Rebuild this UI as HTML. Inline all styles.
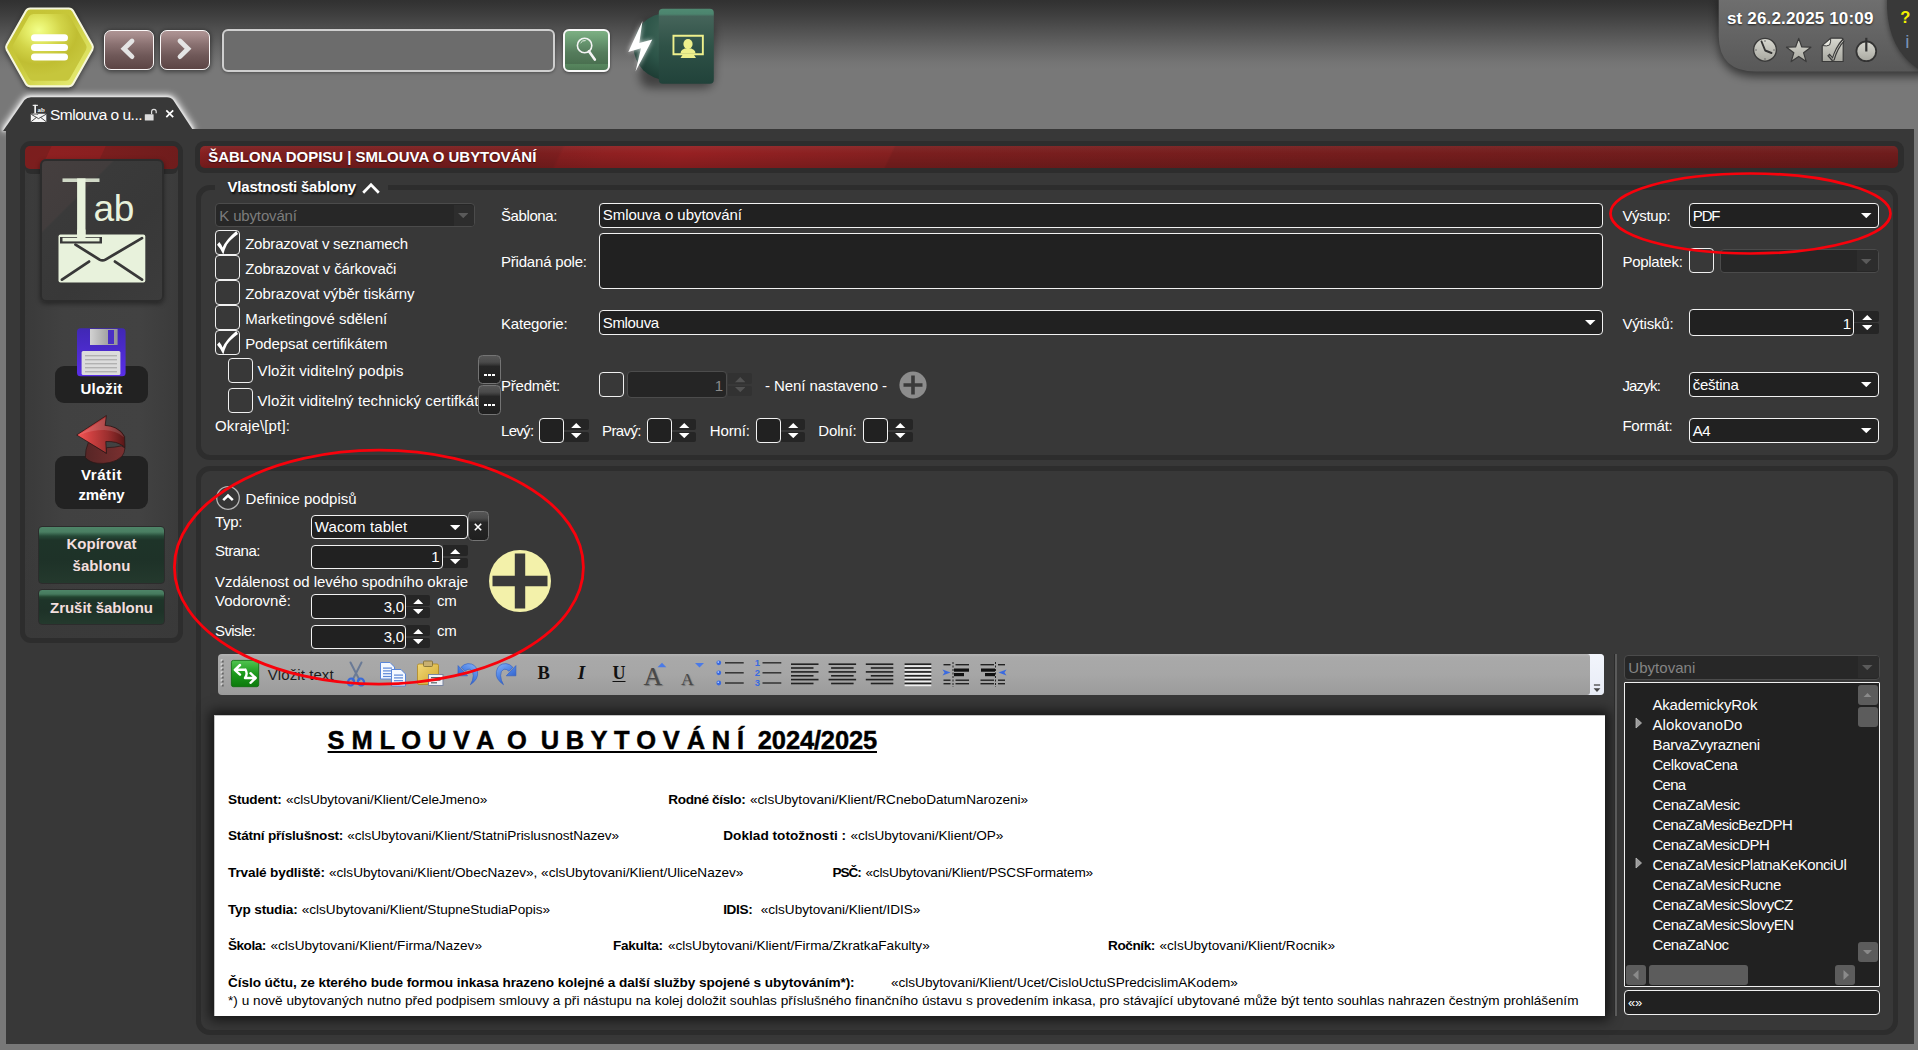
<!DOCTYPE html>
<html lang="cs">
<head>
<meta charset="utf-8">
<title>Šablona dopisu | Smlouva o ubytování</title>
<style>
*{box-sizing:border-box;margin:0;padding:0}
html,body{width:1918px;height:1050px;overflow:hidden;background:#787878}
body{font-family:"Liberation Sans","DejaVu Sans",sans-serif;font-size:15px;color:#fff;position:relative}
#root{position:absolute;left:0;top:0;width:1918px;height:1050px;overflow:hidden;
 background:linear-gradient(#313131 0,#343434 4px,#404040 16px,#535353 32px,#666 48px,#747474 62px,#787878 70px,#787878 100%)}
#root div,#root span,#root svg{position:absolute}
.t{white-space:nowrap;line-height:1;color:#fff}
</style>
</head>
<body>
<div id="root">
<!-- MAIN DARK AREA -->
<div id="main" style="left:6px;top:129px;width:1908px;height:915px;background:#383838"></div>

<!-- TOPBAR -->
<div id="topbar" style="left:0;top:0;width:1918px;height:129px"><svg width="1918" height="135" viewBox="0 0 1918 135" style="left:0;top:0;overflow:visible"><defs>
<filter id="glow" x="-20%" y="-40%" width="140%" height="180%"><feGaussianBlur stdDeviation="3"/></filter>
<filter id="glow1" x="-20%" y="-40%" width="140%" height="180%"><feGaussianBlur stdDeviation="1.1"/></filter><filter id="sh" x="-30%" y="-30%" width="160%" height="180%"><feGaussianBlur stdDeviation="5"/></filter>
<filter id="sh2" x="-30%" y="-30%" width="160%" height="180%"><feGaussianBlur stdDeviation="2.5"/></filter>
<radialGradient id="hexg" cx="0.33" cy="0.2" r="0.8"><stop offset="0" stop-color="#f2ff8a"/><stop offset="0.2" stop-color="#e6ee6a"/><stop offset="0.45" stop-color="#d2d448"/><stop offset="0.75" stop-color="#c0be32"/><stop offset="1" stop-color="#c6c63c"/></radialGradient>
<linearGradient id="hexo" x1="0" y1="0" x2="1" y2="1"><stop offset="0" stop-color="#c4c234"/><stop offset="0.45" stop-color="#c8c83a"/><stop offset="0.7" stop-color="#d8dc58"/><stop offset="1" stop-color="#e8ee78"/></linearGradient>
<linearGradient id="gbox" x1="0" y1="0" x2="0" y2="1"><stop offset="0" stop-color="#4f8a72"/><stop offset="0.07" stop-color="#4c846e"/><stop offset="0.1" stop-color="#45645a"/><stop offset="0.5" stop-color="#2f5247"/><stop offset="1" stop-color="#21423a"/></linearGradient>
<radialGradient id="gcirc" cx="0.6" cy="0.3" r="0.75"><stop offset="0" stop-color="#456a5c"/><stop offset="0.6" stop-color="#2c5448"/><stop offset="1" stop-color="#1c3a32"/></radialGradient>
<linearGradient id="dpan" x1="0" y1="0" x2="0" y2="1"><stop offset="0" stop-color="#707070"/><stop offset="1" stop-color="#585858"/></linearGradient>
<linearGradient id="icg" x1="0" y1="0" x2="0" y2="1"><stop offset="0" stop-color="#d8d8d0"/><stop offset="1" stop-color="#a8a8a0"/></linearGradient>
</defs><path d="M3 131 L24.5 100 Q27 97.2 31 97.2 L167 97.2 Q171 97.2 173.5 100.5 L193.5 131" fill="none" stroke="#fff" stroke-width="6" opacity=".8" filter="url(#glow)"/><path d="M3 131 L24.5 100 Q27 97.2 31 97.2 L167 97.2 Q171 97.2 173.5 100.5 L193.5 131" fill="none" stroke="#fff" stroke-width="3" opacity=".7" filter="url(#glow1)"/><rect x="6" y="129" width="1908" height="11" fill="#383838"/><path d="M3 131 L24.5 100 Q27 97.2 31 97.2 L167 97.2 Q171 97.2 173.5 100.5 L193.5 131 Z" fill="#383838"/><polygon points="11.0,49.4 30.2,15.4 68.8,15.4 88.0,49.4 68.8,83.4 30.2,83.4" fill="#000" stroke="#000" stroke-width="12" stroke-linejoin="round" opacity=".5" filter="url(#sh2)"/><polygon points="11.0,47.4 30.2,13.4 68.8,13.4 88.0,47.4 68.8,81.4 30.2,81.4" fill="#f6f7dc" stroke="#f6f7dc" stroke-width="12" stroke-linejoin="round"/><polygon points="11.0,47.4 30.2,13.4 68.8,13.4 88.0,47.4 68.8,81.4 30.2,81.4" fill="url(#hexo)" stroke="url(#hexo)" stroke-width="7.8" stroke-linejoin="round"/><polygon points="17.3,47.4 33.4,19.0 65.6,19.0 81.7,47.4 65.6,75.8 33.4,75.8" fill="url(#hexg)" stroke="url(#hexg)" stroke-width="10" stroke-linejoin="round"/><rect x="31" y="34.2" width="37" height="7" rx="3.5" fill="#fff"/><rect x="31" y="43.9" width="37" height="7" rx="3.5" fill="#fff"/><rect x="31" y="53.6" width="37" height="7" rx="3.5" fill="#fff"/><rect x="640" y="20" width="74" height="68" rx="10" fill="#000" opacity=".45" filter="url(#sh)"/><circle cx="667" cy="46.5" r="33.5" fill="url(#gcirc)"/><rect x="658.8" y="8.8" width="55" height="75" rx="4" fill="url(#gbox)"/><path d="M642.5 21 L628.3 52 L641 48.2 L635.5 71.5 L652.3 39.5 L639.3 43 Z" fill="#fff" opacity=".8" filter="url(#sh2)"/><path d="M642.5 21 L628.3 52 L641 48.2 L635.5 71.5 L652.3 39.5 L639.3 43 Z" fill="#fff"/><g fill="#eef08c"><path d="M672.5 34.8 h31.3 v20.4 h-31.3 Z M674.4 36.7 v16.6 h27.5 v-16.6 Z" fill-rule="evenodd"/><ellipse cx="688" cy="44" rx="4.6" ry="5"/><path d="M680.5 53.5 q0 -5 7.5 -5.5 q7.5 .5 7.5 5.5 Z"/><path d="M682.5 55 h11.5 l2 3 h-15.5 Z"/></g><path d="M1718.7 -5 L1718.7 36 Q1719 71.6 1756 71.6 L1925 71.6 L1925 -5 Z" fill="#000" opacity=".55" filter="url(#sh)" transform="translate(0,5)"/><path d="M1718.7 -5 L1718.7 36 Q1719 71.6 1756 71.6 L1925 71.6 L1925 -5 Z" fill="url(#dpan)"/><path d="M1886 -5 L1886 8 Q1888 55 1925 74 L1925 -5 Z" fill="#000" opacity=".4" filter="url(#sh2)"/><path d="M1887 -5 L1887 8 Q1889 54 1925 73 L1925 -5 Z" fill="#393939"/><g><circle cx="1765" cy="49.8" r="11.4" fill="url(#icg)" stroke="#3a3a3a" stroke-width="1.4"/><path d="M1761.5 41.5 L1765.2 50.5 L1771.5 53" fill="none" stroke="#333" stroke-width="1.9" stroke-linecap="round" stroke-linejoin="round"/><g fill="#666"><circle cx="1765" cy="41" r=".8"/><circle cx="1765" cy="59" r=".8"/><circle cx="1756" cy="50" r=".8"/><circle cx="1774" cy="50" r=".8"/></g></g><polygon points="1798.7,38.4 1801.8,47.0 1810.9,47.2 1803.6,52.8 1806.2,61.6 1798.7,56.4 1791.2,61.6 1793.8,52.8 1786.5,47.2 1795.6,47.0" fill="url(#icg)" stroke="#3a3a3a" stroke-width="1.2" stroke-linejoin="round"/><g><path d="M1830.7 38.2 L1841.5 38.2 Q1843.2 38.2 1843.2 40 L1843.2 61.5 L1822.2 61.5 L1822.2 45.6 Z" fill="url(#icg)" stroke="#3a3a3a" stroke-width="1.2" stroke-linejoin="round"/><path d="M1822.4 45.6 Q1827 46.5 1829.6 45 Q1831 42 1830.7 38.4 Z" fill="#e6e6de" stroke="#3a3a3a" stroke-width="1"/><path d="M1828.4 54.6 L1833 60 Q1836.5 47.5 1843.6 39.8" fill="none" stroke="#3a3a3a" stroke-width="3.2" stroke-linejoin="bevel"/><path d="M1829.3 55.6 L1833 59.6 Q1836.5 47.8 1843.2 40.6" fill="none" stroke="#c8c8c0" stroke-width=".9"/></g><g><circle cx="1866.3" cy="51.3" r="9.9" fill="url(#icg)" stroke="#333" stroke-width="1.8"/><path d="M1866.3 37.8 V51.5" stroke="#333" stroke-width="2.2" stroke-linecap="butt"/></g></svg>
<div style="left:103.8px;top:30.2px;width:50px;height:39.6px;border:1.8px solid #fbf8f8;border-radius:7px;background:linear-gradient(#ae9494 0,#a48a8a 12%,#8a7171 35%,#6f5858 65%,#5c4545 100%);box-shadow:0 1px 4px 1px rgba(0,0,0,.45)"><svg width="50" height="40" viewBox="0 0 50 40" style="left:-2px;top:-2px"><path d="M29 12 L21 19.8 L29 27.6" fill="none" stroke="#e4e4e4" stroke-width="4.8" stroke-linecap="round" stroke-linejoin="miter"/></svg></div>
<div style="left:160.1px;top:30.2px;width:49.8px;height:39.6px;border:1.8px solid #fbf8f8;border-radius:7px;background:linear-gradient(#ae9494 0,#a48a8a 12%,#8a7171 35%,#6f5858 65%,#5c4545 100%);box-shadow:0 1px 4px 1px rgba(0,0,0,.45)"><svg width="50" height="40" viewBox="0 0 50 40" style="left:-2px;top:-2px"><path d="M21 12 L29 19.8 L21 27.6" fill="none" stroke="#e4e4e4" stroke-width="4.8" stroke-linecap="round" stroke-linejoin="miter"/></svg></div>
<div style="left:222px;top:28.8px;width:333.3px;height:43.2px;border:2px solid #cfcfcf;border-radius:6px;background:#6c6c6c;box-shadow:0 1px 3px rgba(0,0,0,.35)"></div>
<div style="left:562.5px;top:28.8px;width:47.5px;height:43.2px;border:2px solid #f8f8f8;border-radius:6px;background:linear-gradient(#7db083 0,#6a9a72 25%,#557c5c 55%,#4a7050 84%,#57865e 86%,#4f7a56 100%);box-shadow:0 1px 3px rgba(0,0,0,.45)"><svg width="48" height="44" viewBox="0 0 48 44" style="left:-2px;top:-2px"><circle cx="21.6" cy="16.5" r="7.2" fill="none" stroke="#f4f4f4" stroke-width="1.6"/><path d="M17.6 14 A5 5 0 0 1 22.6 11.6" fill="none" stroke="#e8f0e8" stroke-width="1"/><path d="M25.9 22.3 L31.8 30.6" stroke="#f4f4f4" stroke-width="2.6" stroke-linecap="round"/></svg></div>
<span class="t" style="left:1727.00px;top:9.91px;font-size:17px;line-height:17px;font-weight:700;text-shadow:0 1px 2px rgba(0,0,0,.7);letter-spacing:0.157px;">st 26.2.2025 10:09</span>
<span class="t" style="left:1900.30px;top:9.23px;font-size:16.5px;line-height:16.5px;font-weight:700;color:#f2f000;">?</span>
<span class="t" style="left:1905.20px;top:31.62px;font-size:19px;line-height:19px;color:#7892b8;">i</span>
<svg width="20" height="20" viewBox="30 103 20 20" style="left:30px;top:103px"><g fill="#f4f4f4"><rect x="32.7" y="104.8" width="5.2" height="1.1"/><rect x="34.3" y="104.8" width="1.7" height="10"/><rect x="30.8" y="113.8" width="15.5" height="8.2" rx=".6"/></g><path d="M31.2 114.3 L38.5 118.6 L46 114.3 M31.2 121.6 L36.3 117.5 M46 121.6 L40.8 117.5" stroke="#383838" stroke-width=".9" fill="none"/><path d="M32.5 113.4 h5.6 v1.5 h-5.6 Z" fill="#383838"/><rect x="32.9" y="113.6" width="4.8" height=".9" fill="#f4f4f4"/></svg>
<span class="t" style="left:37.60px;top:106.71px;font-size:6.8px;line-height:6.8px;font-weight:700;color:#f4f4f4;font-family:'Liberation Serif',serif;">ab</span>
<span class="t" style="left:50.00px;top:107.48px;font-size:15.5px;line-height:15.5px;letter-spacing:-0.506px;">Smlouva o u...</span>
<svg width="14" height="16" viewBox="0 0 14 16" style="left:144px;top:106.6px"><rect x=".8" y="7.2" width="8.8" height="6.3" rx=".6" fill="#dcdcdc"/><path d="M7.6 7 V4.6 A2.3 2.3 0 0 1 12.2 4.6 V6.2" fill="none" stroke="#dcdcdc" stroke-width="1.2"/></svg>
<svg width="12" height="12" viewBox="0 0 12 12" style="left:164px;top:108px"><path d="M2.3 2.3 L9.2 9.2 M9.2 2.3 L2.3 9.2" stroke="#fff" stroke-width="1.7"/></svg></div>

<!-- LEFT PANEL -->
<div id="left" style="left:0;top:0;width:200px;height:1050px"><div style="left:20px;top:140.5px;width:163px;height:502px;border:5px solid #2d2d2d;border-radius:11px;background:linear-gradient(rgba(56,56,56,0) 0,rgba(56,56,56,0) 80%,rgba(57,57,57,.9) 97%),linear-gradient(90deg,#3a3a3a 0,#414141 25%,#424242 75%,#3b3b3b 100%)"></div>
<div style="left:25px;top:145px;width:153px;height:29px;background:#2d2d2d;border-radius:5px 5px 6px 6px"></div>
<div style="left:25.4px;top:146px;width:152.6px;height:23.4px;background:linear-gradient(115deg,#7b1e1e 0,#7c1e1e 16%,#8e2021 16.6%,#8a1f20 49%,#7a1e1e 49.6%,#6e1c1c 100%);border-radius:5px"></div>
<div style="left:39.5px;top:159.4px;width:124.3px;height:143px;border:2px solid #2c2c2c;border-radius:6px;background:linear-gradient(135deg,#453f3f 0,#423d3d 27%,#3a3a3a 28%,#383838 60%,#3c3c3c 100%);box-shadow:0 2px 5px rgba(0,0,0,.4)"></div>
<svg width="124" height="143" viewBox="39.5 159.4 124 143" style="left:39.5px;top:159.4px"><g fill="#e8f2dc"><rect x="62" y="178.8" width="37" height="3.6" fill="#d0d8c6"/><rect x="76.6" y="178.8" width="8.4" height="62"/><rect x="58" y="235" width="86.8" height="48" rx="2"/></g><path d="M59.5 237.5 h42 v6.5 h-42 Z" fill="#383838"/><rect x="62" y="238.2" width="37" height="3.6" fill="#e8f2dc"/><rect x="76.6" y="230" width="8.4" height="10" fill="#e8f2dc"/><path d="M75 245 L99 260 Q102 261.7 105 260 L141.5 238.5 M61.5 280 L88.5 262 M141.5 280 L114.5 262" fill="none" stroke="#383838" stroke-width="2.8" stroke-linecap="round"/></svg>
<span class="t" style="left:93.50px;top:189.68px;font-size:37px;line-height:37px;color:#e8f2dc;letter-spacing:-0.328px;">ab</span>
<div style="left:55px;top:366px;width:93px;height:37px;background:#222;border-radius:9px"></div>
<svg width="50" height="50" viewBox="76 327 50 50" style="left:76px;top:327px"><defs><linearGradient id="fl" x1="0" y1="0" x2="0" y2="1"><stop offset="0" stop-color="#4028b4"/><stop offset="1" stop-color="#5a2ee8"/></linearGradient><linearGradient id="sv" x1="0" y1="0" x2="1" y2="0"><stop offset="0" stop-color="#d2d2d2"/><stop offset=".6" stop-color="#a6a6a6"/><stop offset="1" stop-color="#969696"/></linearGradient></defs><rect x="77" y="328.3" width="48.6" height="48" rx="3.5" fill="url(#fl)"/><rect x="90" y="329" width="27.6" height="16" fill="url(#sv)"/><rect x="108" y="330" width="6" height="14" fill="#4a30c4"/><rect x="81.6" y="351" width="38.8" height="24" rx="1.5" fill="#dcdcdc"/><rect x="85" y="355.5" width="32" height=".7" fill="#868686"/><rect x="85" y="359.5" width="32" height=".7" fill="#868686"/><rect x="85" y="363.5" width="32" height=".7" fill="#868686"/><rect x="85" y="367.5" width="32" height=".7" fill="#868686"/><rect x="85" y="371.5" width="32" height=".7" fill="#868686"/></svg>
<span class="t" style="left:80.50px;top:381.10px;font-size:15px;line-height:15px;font-weight:700;letter-spacing:0.195px;">Uložit</span>
<div style="left:55px;top:456px;width:93px;height:53px;background:#222;border-radius:9px"></div>
<svg width="54" height="52" viewBox="74 414 54 52" style="left:74px;top:414px"><defs><linearGradient id="ar1" x1="0" y1="0" x2="1" y2="0"><stop offset="0" stop-color="#f85858"/><stop offset=".3" stop-color="#cc4040"/><stop offset=".65" stop-color="#9a2e2e"/><stop offset="1" stop-color="#561616"/></linearGradient><linearGradient id="ar2" x1="0" y1="0" x2="1" y2="0"><stop offset="0" stop-color="#572626"/><stop offset="1" stop-color="#7a3030"/></linearGradient></defs><path d="M88.5 442 Q85 450 85.4 457.6 Q90 462.5 97.2 463.2 Q104 463.8 109.5 462.6 Q117 461 121.9 456.4 Q124.5 453.5 125 448 L121.3 445.9 Q115 447.5 106.4 447.7 L106.4 453.3 Z" fill="url(#ar2)" stroke="#2a1616" stroke-width=".7"/><path d="M76.7 435 L106.4 415.5 L105.2 425.4 Q111 425.8 115.7 427.9 Q122 431 124.6 436.5 L125 447.7 Q123.6 446.2 121.9 445.2 Q119 443.4 115.7 442.4 Q111 441.3 105.8 441.5 L106.4 453.3 Z" fill="url(#ar1)" stroke="#2a1616" stroke-width=".8" stroke-linejoin="round"/><path d="M79 435 L105.6 417.5 L104.5 426 Q112 426.2 117 429.5 Q122 432.5 124.2 437.5 Q117 430.5 104 430 Q92 430 79 435 Z" fill="#fff" opacity=".13"/></svg>
<span class="t" style="left:81.00px;top:466.80px;font-size:15px;line-height:15px;font-weight:700;letter-spacing:0.581px;">Vrátit</span>
<span class="t" style="left:78.50px;top:486.80px;font-size:15px;line-height:15px;font-weight:700;letter-spacing:-0.138px;">změny</span>
<div style="left:38px;top:526.2px;width:127.2px;height:57.8px;border:1px solid #2c2c2c;border-radius:4px;background:linear-gradient(#4e8568 0,#4a7e62 5px,#264a38 9px,#1e3429 13px,#1e3228 60%,#24392d 100%)"></div>
<div style="left:38px;top:589px;width:127.2px;height:35.8px;border:1px solid #2c2c2c;border-radius:4px;background:linear-gradient(#4e8568 0,#467a5e 4px,#22432f 7px,#1e3429 10px,#1e3228 60%,#24392d 100%)"></div>
<span class="t" style="left:66.50px;top:536.10px;font-size:15px;line-height:15px;font-weight:700;color:#f2dede;letter-spacing:-0.002px;">Kopírovat</span>
<span class="t" style="left:72.50px;top:558.00px;font-size:15px;line-height:15px;font-weight:700;color:#f2dede;letter-spacing:0.069px;">šablonu</span>
<span class="t" style="left:50.00px;top:599.70px;font-size:15px;line-height:15px;font-weight:700;color:#f2dede;letter-spacing:-0.025px;">Zrušit šablonu</span></div>

<!-- HEADER + PROPERTIES -->
<div id="props" style="left:0;top:0;width:1918px;height:480px"><div style="left:195px;top:141px;width:1708.5px;height:32px;background:#2d2d2d;border-radius:9px"></div>
<div style="left:199.6px;top:146.2px;width:1698.9px;height:21.6px;border-radius:5px;background:linear-gradient(115deg,#8a2021 0,#7d1e1f 1.2%,#7a1e1e 20%,#7d1e1f 21.2%,#871f20 21.4%,#8f2021 24%,#962022 28.5%,#8c2021 35%,#852020 40.6%,#7a1e1e 40.75%,#741d1d 70%,#6e1c1c 100%)"></div>
<div style="left:199.6px;top:146.2px;width:1698.9px;height:21.6px;border-radius:5px;background:linear-gradient(rgba(255,255,255,.05) 0,rgba(255,255,255,0) 35%,rgba(0,0,0,.14) 100%)"></div>
<span class="t" style="left:208.30px;top:148.70px;font-size:15px;line-height:15px;font-weight:700;text-shadow:0 1px 1px rgba(0,0,0,.5);letter-spacing:-0.034px;">ŠABLONA DOPISU | SMLOUVA O UBYTOVÁNÍ</span>
<div style="left:196px;top:185px;width:1702px;height:274.8px;border:5px solid #2d2d2d;border-radius:14px"></div>
<div style="left:215px;top:183px;width:173px;height:10px;background:#383838"></div>
<span class="t" style="left:227.60px;top:178.60px;font-size:15px;line-height:15px;font-weight:700;text-shadow:1px 2px 2px rgba(0,0,0,.8);letter-spacing:-0.230px;">Vlastnosti šablony</span>
<svg width="20" height="14" viewBox="0 0 20 14" style="left:360.5px;top:181px"><path d="M2.2 11.8 L10 3.8 L17.8 11.8" fill="none" stroke="#fff" stroke-width="2.7"/></svg>
<div style="left:215.3px;top:203.2px;width:260.2px;height:24.3px;background:#272727;border:1.4px solid #4b4b4b;border-radius:4px"></div><div style="left:453.5px;top:204.6px;width:20.6px;height:21.5px;background:#2d2d2d;border-radius:0 3px 3px 0"></div><span class="t" style="left:219.30px;top:208.10px;font-size:15px;line-height:15px;color:#7c7c7c;letter-spacing:-0.156px;">K ubytování</span><svg width="10.5" height="5.2" viewBox="0 0 10.5 5.2" style="left:457.75px;top:213.05px"><path d="M0 0 H10.5 L5.25 5.2 Z" fill="#5a5a5a"/></svg>
<div style="left:215px;top:230px;width:25.2px;height:25.2px;border:1.6px solid #f0f0f0;border-radius:4px;background:#383838"></div><svg width="30" height="30" viewBox="0 0 30 30" style="left:215px;top:230px;overflow:visible"><path d="M2 14.8 L4.3 12 Q6.5 14.5 7.6 17.6 Q11 9.5 21.3 1 L23 4 Q14.5 10.5 12 14.5 Q9.5 19.5 8.3 24.5 Q5.5 18.5 2 14.8 Z" fill="#fff"/></svg>
<span class="t" style="left:245.20px;top:235.70px;font-size:15px;line-height:15px;letter-spacing:-0.226px;">Zobrazovat v seznamech</span>
<div style="left:215px;top:255px;width:25.2px;height:25.2px;border:1.6px solid #f0f0f0;border-radius:4px;background:#383838"></div>
<span class="t" style="left:245.20px;top:260.70px;font-size:15px;line-height:15px;letter-spacing:-0.147px;">Zobrazovat v čárkovači</span>
<div style="left:215px;top:280px;width:25.2px;height:25.2px;border:1.6px solid #f0f0f0;border-radius:4px;background:#383838"></div>
<span class="t" style="left:245.20px;top:285.70px;font-size:15px;line-height:15px;letter-spacing:-0.097px;">Zobrazovat výběr tiskárny</span>
<div style="left:215px;top:305px;width:25.2px;height:25.2px;border:1.6px solid #f0f0f0;border-radius:4px;background:#383838"></div>
<span class="t" style="left:245.20px;top:310.70px;font-size:15px;line-height:15px;letter-spacing:-0.035px;">Marketingové sdělení</span>
<div style="left:215px;top:330px;width:25.2px;height:25.2px;border:1.6px solid #f0f0f0;border-radius:4px;background:#383838"></div><svg width="30" height="30" viewBox="0 0 30 30" style="left:215px;top:330px;overflow:visible"><path d="M2 14.8 L4.3 12 Q6.5 14.5 7.6 17.6 Q11 9.5 21.3 1 L23 4 Q14.5 10.5 12 14.5 Q9.5 19.5 8.3 24.5 Q5.5 18.5 2 14.8 Z" fill="#fff"/></svg>
<span class="t" style="left:245.20px;top:335.70px;font-size:15px;line-height:15px;letter-spacing:-0.093px;">Podepsat certifikátem</span>
<div style="left:228px;top:358px;width:25.2px;height:25.2px;border:1.6px solid #f0f0f0;border-radius:4px;background:#383838"></div>
<span class="t" style="left:257.50px;top:362.50px;font-size:15px;line-height:15px;letter-spacing:0.121px;">Vložit viditelný podpis</span>
<div style="left:228px;top:388.3px;width:25.2px;height:25.2px;border:1.6px solid #f0f0f0;border-radius:4px;background:#383838"></div>
<span class="t" style="left:257.50px;top:392.50px;font-size:15px;line-height:15px;letter-spacing:0.072px;">Vložit viditelný technický certifkát</span>
<div style="left:478px;top:354.9px;width:22.8px;height:28.7px;border:1.3px solid #747474;border-radius:4.5px;background:linear-gradient(#565656 0,#4b4b4b 6px,#3d3d3d 8px,#262626 10.5px,#1f1f1f 100%)"></div>
<div style="left:478px;top:384.6px;width:22.8px;height:30.1px;border:1.3px solid #747474;border-radius:4.5px;background:linear-gradient(#565656 0,#4b4b4b 6px,#3d3d3d 8px,#262626 10.5px,#1f1f1f 100%)"></div>
<div style="left:483.7px;top:374px;width:3.3px;height:2.3px;background:#fff"></div>
<div style="left:487.9px;top:374px;width:3.3px;height:2.3px;background:#fff"></div>
<div style="left:492.1px;top:374px;width:3.3px;height:2.3px;background:#fff"></div>
<div style="left:483.7px;top:403.8px;width:3.3px;height:2.3px;background:#fff"></div>
<div style="left:487.9px;top:403.8px;width:3.3px;height:2.3px;background:#fff"></div>
<div style="left:492.1px;top:403.8px;width:3.3px;height:2.3px;background:#fff"></div>
<span class="t" style="left:215.00px;top:418.20px;font-size:15px;line-height:15px;letter-spacing:0.137px;">Okraje\[pt]:</span>
<span class="t" style="left:501.00px;top:208.10px;font-size:15px;line-height:15px;letter-spacing:-0.402px;">Šablona:</span>
<div style="left:599px;top:203.3px;width:1004px;height:24.6px;background:#212121;border:1.7px solid #f2f2f2;border-radius:4px"></div><span class="t" style="left:602.80px;top:207.40px;font-size:15px;line-height:15px;letter-spacing:-0.047px;">Smlouva o ubytování</span>
<span class="t" style="left:501.00px;top:253.60px;font-size:15px;line-height:15px;letter-spacing:-0.200px;">Přidaná pole:</span>
<div style="left:599px;top:233px;width:1004px;height:56px;background:#212121;border:1.7px solid #f2f2f2;border-radius:4px"></div>
<span class="t" style="left:501.00px;top:315.80px;font-size:15px;line-height:15px;letter-spacing:-0.199px;">Kategorie:</span>
<div style="left:599px;top:310px;width:1004px;height:25px;background:#212121;border:1.7px solid #f2f2f2;border-radius:4px"></div><span class="t" style="left:602.80px;top:314.80px;font-size:15px;line-height:15px;letter-spacing:-0.337px;">Smlouva</span><svg width="10.5" height="5.2" viewBox="0 0 10.5 5.2" style="left:1585.15px;top:320.20px"><path d="M0 0 H10.5 L5.25 5.2 Z" fill="#fff"/></svg>
<span class="t" style="left:501.00px;top:377.90px;font-size:15px;line-height:15px;letter-spacing:-0.232px;">Předmět:</span>
<div style="left:599px;top:372px;width:25.2px;height:25.2px;border:1.6px solid #f0f0f0;border-radius:4px;background:#383838"></div>
<div style="left:627.3px;top:371.2px;width:99.4px;height:26.4px;background:#252525;border:1.3px solid #4c4c4c;border-radius:4px"></div>
<span class="t" style="left:714.66px;top:377.60px;font-size:15px;line-height:15px;color:#8a8a8a;">1</span>
<div style="left:727.5px;top:373.35px;width:24px;height:11px;background:#323232;border-radius:0 2px 2px 0"></div><div style="left:727.5px;top:385.55px;width:24px;height:10.3px;background:#323232;border-radius:0 2px 2px 0"></div><svg width="10.5" height="5.2" viewBox="0 0 10.5 5.2" style="left:734.55px;top:377.35px"><path d="M0 5.2 H10.5 L5.25 0 Z" fill="#525252"/></svg><svg width="10.5" height="5.2" viewBox="0 0 10.5 5.2" style="left:734.55px;top:387.25px"><path d="M0 0 H10.5 L5.25 5.2 Z" fill="#525252"/></svg>
<span class="t" style="left:765.00px;top:378.30px;font-size:15px;line-height:15px;letter-spacing:-0.078px;">- Není nastaveno -</span>
<svg width="30" height="30" viewBox="0 0 30 30" style="left:898px;top:369.8px"><circle cx="15" cy="15" r="13.6" fill="#8c8c8c"/><path d="M15 5.5 V24.5 M5.5 15 H24.5" stroke="#3a3a3a" stroke-width="3.6"/></svg>
<span class="t" style="left:501.00px;top:422.50px;font-size:15px;line-height:15px;letter-spacing:-0.692px;">Levý:</span>
<div style="left:539px;top:418.2px;width:25px;height:24.8px;background:#212121;border:1.7px solid #f2f2f2;border-radius:4px"></div>
<div style="left:564px;top:419.3px;width:24.7px;height:11px;background:#252525;border-radius:0 2px 2px 0"></div><div style="left:564px;top:431.5px;width:24.7px;height:10.3px;background:#252525;border-radius:0 2px 2px 0"></div><svg width="10.5" height="5.2" viewBox="0 0 10.5 5.2" style="left:571.40px;top:423.30px"><path d="M0 5.2 H10.5 L5.25 0 Z" fill="#fff"/></svg><svg width="10.5" height="5.2" viewBox="0 0 10.5 5.2" style="left:571.40px;top:433.20px"><path d="M0 0 H10.5 L5.25 5.2 Z" fill="#fff"/></svg>
<span class="t" style="left:602.00px;top:422.50px;font-size:15px;line-height:15px;letter-spacing:-0.603px;">Pravý:</span>
<div style="left:646.7px;top:418.2px;width:25px;height:24.8px;background:#212121;border:1.7px solid #f2f2f2;border-radius:4px"></div>
<div style="left:671.7px;top:419.3px;width:24.7px;height:11px;background:#252525;border-radius:0 2px 2px 0"></div><div style="left:671.7px;top:431.5px;width:24.7px;height:10.3px;background:#252525;border-radius:0 2px 2px 0"></div><svg width="10.5" height="5.2" viewBox="0 0 10.5 5.2" style="left:679.10px;top:423.30px"><path d="M0 5.2 H10.5 L5.25 0 Z" fill="#fff"/></svg><svg width="10.5" height="5.2" viewBox="0 0 10.5 5.2" style="left:679.10px;top:433.20px"><path d="M0 0 H10.5 L5.25 5.2 Z" fill="#fff"/></svg>
<span class="t" style="left:709.80px;top:422.50px;font-size:15px;line-height:15px;letter-spacing:-0.160px;">Horní:</span>
<div style="left:755.8px;top:418.2px;width:25px;height:24.8px;background:#212121;border:1.7px solid #f2f2f2;border-radius:4px"></div>
<div style="left:780.8px;top:419.3px;width:24.7px;height:11px;background:#252525;border-radius:0 2px 2px 0"></div><div style="left:780.8px;top:431.5px;width:24.7px;height:10.3px;background:#252525;border-radius:0 2px 2px 0"></div><svg width="10.5" height="5.2" viewBox="0 0 10.5 5.2" style="left:788.20px;top:423.30px"><path d="M0 5.2 H10.5 L5.25 0 Z" fill="#fff"/></svg><svg width="10.5" height="5.2" viewBox="0 0 10.5 5.2" style="left:788.20px;top:433.20px"><path d="M0 0 H10.5 L5.25 5.2 Z" fill="#fff"/></svg>
<span class="t" style="left:818.30px;top:422.50px;font-size:15px;line-height:15px;letter-spacing:-0.165px;">Dolní:</span>
<div style="left:863px;top:418.2px;width:25px;height:24.8px;background:#212121;border:1.7px solid #f2f2f2;border-radius:4px"></div>
<div style="left:888px;top:419.3px;width:24.7px;height:11px;background:#252525;border-radius:0 2px 2px 0"></div><div style="left:888px;top:431.5px;width:24.7px;height:10.3px;background:#252525;border-radius:0 2px 2px 0"></div><svg width="10.5" height="5.2" viewBox="0 0 10.5 5.2" style="left:895.40px;top:423.30px"><path d="M0 5.2 H10.5 L5.25 0 Z" fill="#fff"/></svg><svg width="10.5" height="5.2" viewBox="0 0 10.5 5.2" style="left:895.40px;top:433.20px"><path d="M0 0 H10.5 L5.25 5.2 Z" fill="#fff"/></svg>
<span class="t" style="left:1622.40px;top:208.10px;font-size:15px;line-height:15px;letter-spacing:-0.304px;">Výstup:</span>
<div style="left:1689px;top:203.3px;width:190px;height:24.6px;background:#212121;border:1.7px solid #f2f2f2;border-radius:4px"></div><span class="t" style="left:1692.80px;top:208.10px;font-size:15px;line-height:15px;letter-spacing:-1.133px;">PDF</span><svg width="10.5" height="5.2" viewBox="0 0 10.5 5.2" style="left:1861.15px;top:213.30px"><path d="M0 0 H10.5 L5.25 5.2 Z" fill="#fff"/></svg>
<span class="t" style="left:1622.40px;top:253.60px;font-size:15px;line-height:15px;letter-spacing:-0.261px;">Poplatek:</span>
<div style="left:1689px;top:248.3px;width:25.2px;height:25.2px;border:1.6px solid #f0f0f0;border-radius:4px;background:#383838"></div>
<div style="left:1719.5px;top:249px;width:159.5px;height:23.6px;background:#272727;border:1.4px solid #4b4b4b;border-radius:4px"></div><div style="left:1857px;top:250.4px;width:20.6px;height:20.8px;background:#2d2d2d;border-radius:0 3px 3px 0"></div><svg width="10.5" height="5.2" viewBox="0 0 10.5 5.2" style="left:1861.25px;top:258.50px"><path d="M0 0 H10.5 L5.25 5.2 Z" fill="#5a5a5a"/></svg>
<span class="t" style="left:1622.40px;top:315.80px;font-size:15px;line-height:15px;letter-spacing:-0.177px;">Výtisků:</span>
<div style="left:1689px;top:308.9px;width:165px;height:27.1px;background:#212121;border:1.7px solid #f2f2f2;border-radius:4px"></div><span class="t" style="left:1842.66px;top:315.90px;font-size:15px;line-height:15px;">1</span>
<div style="left:1854px;top:311.2px;width:25px;height:11px;background:#252525;border-radius:0 2px 2px 0"></div><div style="left:1854px;top:323.4px;width:25px;height:10.3px;background:#252525;border-radius:0 2px 2px 0"></div><svg width="10.5" height="5.2" viewBox="0 0 10.5 5.2" style="left:1861.55px;top:315.20px"><path d="M0 5.2 H10.5 L5.25 0 Z" fill="#fff"/></svg><svg width="10.5" height="5.2" viewBox="0 0 10.5 5.2" style="left:1861.55px;top:325.10px"><path d="M0 0 H10.5 L5.25 5.2 Z" fill="#fff"/></svg>
<span class="t" style="left:1622.40px;top:378.30px;font-size:15px;line-height:15px;letter-spacing:-0.819px;">Jazyk:</span>
<div style="left:1689px;top:372px;width:190px;height:25px;background:#212121;border:1.7px solid #f2f2f2;border-radius:4px"></div><span class="t" style="left:1692.80px;top:376.80px;font-size:15px;line-height:15px;letter-spacing:-0.262px;">čeština</span><svg width="10.5" height="5.2" viewBox="0 0 10.5 5.2" style="left:1861.15px;top:382.20px"><path d="M0 0 H10.5 L5.25 5.2 Z" fill="#fff"/></svg>
<span class="t" style="left:1622.40px;top:418.30px;font-size:15px;line-height:15px;letter-spacing:-0.212px;">Formát:</span>
<div style="left:1689px;top:418.2px;width:190px;height:24.6px;background:#212121;border:1.7px solid #f2f2f2;border-radius:4px"></div><span class="t" style="left:1692.80px;top:423.00px;font-size:15px;line-height:15px;letter-spacing:-0.480px;">A4</span><svg width="10.5" height="5.2" viewBox="0 0 10.5 5.2" style="left:1861.15px;top:428.20px"><path d="M0 0 H10.5 L5.25 5.2 Z" fill="#fff"/></svg></div>

<!-- LOWER PANEL -->
<div id="lower" style="left:0;top:0;width:1918px;height:1050px"><div style="left:196px;top:466.3px;width:1702px;height:568.4px;border:5.2px solid #2d2d2d;border-radius:14px"></div>
<svg width="26" height="26" viewBox="0 0 26 26" style="left:215.3px;top:484.9px"><circle cx="13" cy="13" r="11.3" fill="#363636" stroke="#b4b4b4" stroke-width="1.3"/><path d="M8.2 15.2 L13 10.5 L17.8 15.2" fill="none" stroke="#fff" stroke-width="2.5"/></svg>
<span class="t" style="left:245.60px;top:490.90px;font-size:15px;line-height:15px;letter-spacing:0.006px;">Definice podpisů</span>
<span class="t" style="left:215.00px;top:513.60px;font-size:15px;line-height:15px;letter-spacing:-0.340px;">Typ:</span>
<div style="left:311px;top:514.5px;width:156.7px;height:24.7px;background:#212121;border:1.7px solid #f2f2f2;border-radius:4px"></div><span class="t" style="left:314.80px;top:519.30px;font-size:15px;line-height:15px;letter-spacing:0.112px;">Wacom tablet</span><svg width="10.5" height="5.2" viewBox="0 0 10.5 5.2" style="left:449.85px;top:524.55px"><path d="M0 0 H10.5 L5.25 5.2 Z" fill="#fff"/></svg>
<div style="left:468px;top:511.2px;width:20.8px;height:29.4px;border:1.3px solid #747474;border-radius:4.5px;background:linear-gradient(#565656 0,#4b4b4b 6px,#3d3d3d 8px,#262626 10.5px,#1f1f1f 100%)"></div>
<svg width="10" height="10" viewBox="0 0 10 10" style="left:473.3px;top:522.3px"><path d="M1.8 1.8 L8.2 8.2 M8.2 1.8 L1.8 8.2" stroke="#fff" stroke-width="1.6"/></svg>
<span class="t" style="left:215.00px;top:543.30px;font-size:15px;line-height:15px;letter-spacing:-0.482px;">Strana:</span>
<div style="left:311px;top:544.5px;width:131.7px;height:24.2px;background:#212121;border:1.7px solid #f2f2f2;border-radius:4px"></div><span class="t" style="left:431.36px;top:549.30px;font-size:15px;line-height:15px;">1</span>
<div style="left:442.7px;top:545.3px;width:25px;height:11px;background:#252525;border-radius:0 2px 2px 0"></div><div style="left:442.7px;top:557.5px;width:25px;height:10.3px;background:#252525;border-radius:0 2px 2px 0"></div><svg width="10.5" height="5.2" viewBox="0 0 10.5 5.2" style="left:450.25px;top:549.30px"><path d="M0 5.2 H10.5 L5.25 0 Z" fill="#fff"/></svg><svg width="10.5" height="5.2" viewBox="0 0 10.5 5.2" style="left:450.25px;top:559.20px"><path d="M0 0 H10.5 L5.25 5.2 Z" fill="#fff"/></svg>
<span class="t" style="left:215.00px;top:574.20px;font-size:15px;line-height:15px;letter-spacing:-0.038px;">Vzdálenost od levého spodního okraje</span>
<span class="t" style="left:215.00px;top:593.30px;font-size:15px;line-height:15px;letter-spacing:0.009px;">Vodorovně:</span>
<div style="left:311px;top:594px;width:94.6px;height:24.8px;background:#212121;border:1.7px solid #f2f2f2;border-radius:4px"></div><span class="t" style="left:383.70px;top:598.80px;font-size:15px;line-height:15px;letter-spacing:-0.286px;">3,0</span>
<div style="left:405.6px;top:595.1px;width:24.4px;height:11px;background:#252525;border-radius:0 2px 2px 0"></div><div style="left:405.6px;top:607.3px;width:24.4px;height:10.3px;background:#252525;border-radius:0 2px 2px 0"></div><svg width="10.5" height="5.2" viewBox="0 0 10.5 5.2" style="left:412.85px;top:599.10px"><path d="M0 5.2 H10.5 L5.25 0 Z" fill="#fff"/></svg><svg width="10.5" height="5.2" viewBox="0 0 10.5 5.2" style="left:412.85px;top:609.00px"><path d="M0 0 H10.5 L5.25 5.2 Z" fill="#fff"/></svg>
<span class="t" style="left:437.00px;top:593.30px;font-size:15px;line-height:15px;letter-spacing:-0.250px;">cm</span>
<span class="t" style="left:215.00px;top:623.40px;font-size:15px;line-height:15px;letter-spacing:-0.598px;">Svisle:</span>
<div style="left:311px;top:624.5px;width:94.6px;height:24.2px;background:#212121;border:1.7px solid #f2f2f2;border-radius:4px"></div><span class="t" style="left:383.70px;top:629.30px;font-size:15px;line-height:15px;letter-spacing:-0.286px;">3,0</span>
<div style="left:405.6px;top:625.3px;width:24.4px;height:11px;background:#252525;border-radius:0 2px 2px 0"></div><div style="left:405.6px;top:637.5px;width:24.4px;height:10.3px;background:#252525;border-radius:0 2px 2px 0"></div><svg width="10.5" height="5.2" viewBox="0 0 10.5 5.2" style="left:412.85px;top:629.30px"><path d="M0 5.2 H10.5 L5.25 0 Z" fill="#fff"/></svg><svg width="10.5" height="5.2" viewBox="0 0 10.5 5.2" style="left:412.85px;top:639.20px"><path d="M0 0 H10.5 L5.25 5.2 Z" fill="#fff"/></svg>
<span class="t" style="left:437.00px;top:623.40px;font-size:15px;line-height:15px;letter-spacing:-0.250px;">cm</span>
<svg width="64" height="64" viewBox="0 0 64 64" style="left:488px;top:549px"><circle cx="32" cy="32" r="31" fill="#f3f1aa"/><path d="M32 4.5 V59.5 M4.5 32 H59.5" stroke="#3a3a3a" stroke-width="10.4"/></svg>
<div style="left:218px;top:654px;width:1386px;height:41.2px;border-radius:4px;background:linear-gradient(#b6b6b6 0,#a9a9a9 3px,#a6a6a6 50%,#9b9b9b 100%)"></div><div style="left:1586px;top:654px;width:18.2px;height:41px;border-radius:0 4px 4px 0;background:linear-gradient(#f2f5fc,#e8ecf6)"></div><div style="left:1580px;top:654px;width:9.6px;height:41.2px;border-radius:0 3px 3px 0;background:linear-gradient(#b6b6b6 0,#a9a9a9 3px,#a6a6a6 50%,#9b9b9b 100%)"></div><svg width="10" height="10" viewBox="0 0 10 10" style="left:1592px;top:682.6px"><path d="M1.9 2 H8.1" stroke="#444" stroke-width="1.3"/><path d="M1.6 5.2 H8.4 L5 8.9 Z" fill="#444"/></svg><svg width="800" height="42" viewBox="218 654 800 42" style="left:218px;top:654px"><defs><linearGradient id="gi" x1="0" y1="0" x2="0" y2="1"><stop offset="0" stop-color="#52c452"/><stop offset=".5" stop-color="#1c9a1c"/><stop offset="1" stop-color="#0c7a0c"/></linearGradient><linearGradient id="bl" x1="0" y1="0" x2="0.6" y2="1"><stop offset="0" stop-color="#8ab4f6"/><stop offset=".5" stop-color="#4f84e6"/><stop offset="1" stop-color="#2c5cc4"/></linearGradient><linearGradient id="cl" x1="0" y1="0" x2="1" y2="1"><stop offset="0" stop-color="#f2d878"/><stop offset="1" stop-color="#d0a82c"/></linearGradient></defs><rect x="220.7" y="659.5" width="2" height="2" fill="#e8e8e8"/><rect x="221.7" y="660.5" width="2" height="2" fill="#666"/><rect x="220.7" y="663.5" width="2" height="2" fill="#e8e8e8"/><rect x="221.7" y="664.5" width="2" height="2" fill="#666"/><rect x="220.7" y="667.5" width="2" height="2" fill="#e8e8e8"/><rect x="221.7" y="668.5" width="2" height="2" fill="#666"/><rect x="220.7" y="671.5" width="2" height="2" fill="#e8e8e8"/><rect x="221.7" y="672.5" width="2" height="2" fill="#666"/><rect x="220.7" y="675.5" width="2" height="2" fill="#e8e8e8"/><rect x="221.7" y="676.5" width="2" height="2" fill="#666"/><rect x="220.7" y="679.5" width="2" height="2" fill="#e8e8e8"/><rect x="221.7" y="680.5" width="2" height="2" fill="#666"/><rect x="220.7" y="683.5" width="2" height="2" fill="#e8e8e8"/><rect x="221.7" y="684.5" width="2" height="2" fill="#666"/><rect x="231.4" y="660.4" width="27.3" height="26.3" rx="2" fill="url(#gi)" stroke="#0a6a0a" stroke-width=".8"/><path d="M235.3 669.8 H245.5 M240 665 L234.8 669.8 L240 674.6 M245 678 H255 M250.5 673.2 L255.7 678 L250.5 682.8 M245.5 669.8 Q248 674 245 678" fill="none" stroke="#fff" stroke-width="2.4" stroke-linecap="round" stroke-linejoin="round"/><path d="M350.5 662.5 L359.5 680 M361.5 662.5 L352.5 680" stroke="#6a7a96" stroke-width="2" stroke-linecap="round"/><ellipse cx="351" cy="682" rx="3" ry="3.6" fill="none" stroke="#3a6ad8" stroke-width="2.2" transform="rotate(25 351 682)"/><ellipse cx="361" cy="682" rx="3" ry="3.6" fill="none" stroke="#3a6ad8" stroke-width="2.2" transform="rotate(-25 361 682)"/><path d="M380.5 662.5 h9.5 l4.5 4.5 v12 h-14 Z" fill="#f4f8ff" stroke="#5a86d8" stroke-width="1"/><rect x="383" y="667.5" width="9" height="1.2" fill="#5a86d8"/><rect x="383" y="670.3" width="9" height="1.2" fill="#5a86d8"/><rect x="383" y="673.1" width="9" height="1.2" fill="#5a86d8"/><rect x="383" y="675.9" width="9" height="1.2" fill="#5a86d8"/><path d="M391.5 669.5 h9.5 l4.5 4.5 v12 h-14 Z" fill="#f4f8ff" stroke="#5a86d8" stroke-width="1"/><rect x="394" y="674.5" width="9" height="1.2" fill="#5a86d8"/><rect x="394" y="677.3" width="9" height="1.2" fill="#5a86d8"/><rect x="394" y="680.1" width="9" height="1.2" fill="#5a86d8"/><rect x="394" y="682.9" width="9" height="1.2" fill="#5a86d8"/><rect x="417.5" y="664" width="21" height="20.5" rx="1.5" fill="url(#cl)" stroke="#b08820" stroke-width=".8"/><rect x="423.5" y="661" width="9" height="5.5" rx="1" fill="#c8b070" stroke="#7a6a30" stroke-width=".8"/><rect x="428.5" y="674.5" width="14.5" height="11" fill="#f0f2f8" stroke="#7a86a0" stroke-width="1"/><rect x="431" y="677" width="9.5" height="1.2" fill="#566"/><rect x="431" y="679.6" width="9.5" height="1.2" fill="#566"/><rect x="431" y="682.2" width="6" height="1.2" fill="#566"/><path d="M503.5 684.7 Q495 679 496.4 671.5 Q498 663.5 506 663.6 Q510 664 512.8 667.2 L509 671.2 Q506.5 668.8 504 669.2 Q500.5 670.5 500.6 675.5 Q500.8 680.5 503.5 684.7 Z M515.9 665.6 L515.9 675.8 L506.3 675.8 Z" fill="url(#bl)" stroke="#2f5cc0" stroke-width=".6" stroke-linejoin="round"/><g transform="translate(973.9,0) scale(-1,1)"><path d="M503.5 684.7 Q495 679 496.4 671.5 Q498 663.5 506 663.6 Q510 664 512.8 667.2 L509 671.2 Q506.5 668.8 504 669.2 Q500.5 670.5 500.6 675.5 Q500.8 680.5 503.5 684.7 Z M515.9 665.6 L515.9 675.8 L506.3 675.8 Z" fill="url(#bl)" stroke="#2f5cc0" stroke-width=".6" stroke-linejoin="round"/></g><path d="M657.5 667.3 L666.3 667.3 L662 662.8 Z" fill="#4a7ae8"/><path d="M695 663 L704 663 L699.5 667.5 Z" fill="#4a7ae8"/><circle cx="718.8" cy="662.8" r="2.4" fill="#3a6ae0"/><circle cx="718.2" cy="662.1" r=".8" fill="#cfe0ff"/><rect x="725" y="662.05" width="18.7" height="1.5" fill="#333"/><rect x="762.5" y="662.05" width="18.8" height="1.5" fill="#333"/><circle cx="718.8" cy="672.8" r="2.4" fill="#3a6ae0"/><circle cx="718.2" cy="672.1" r=".8" fill="#cfe0ff"/><rect x="725" y="672.05" width="18.7" height="1.5" fill="#333"/><rect x="762.5" y="672.05" width="18.8" height="1.5" fill="#333"/><circle cx="718.8" cy="683" r="2.4" fill="#3a6ae0"/><circle cx="718.2" cy="682.3" r=".8" fill="#cfe0ff"/><rect x="725" y="682.25" width="18.7" height="1.5" fill="#333"/><rect x="762.5" y="682.25" width="18.8" height="1.5" fill="#333"/><rect x="791" y="663.4" width="27.5" height="1.6" fill="#222"/><rect x="828.6" y="663.4" width="27.5" height="1.6" fill="#222"/><rect x="865.8" y="663.4" width="27.5" height="1.6" fill="#222"/><rect x="904.6" y="663.4" width="26.7" height="1.6" fill="#222"/><rect x="904.6" y="665.3" width="26.7" height="1.6" fill="#f0f0f0"/><rect x="791" y="667.2" width="22.5" height="1.6" fill="#222"/><rect x="831.1" y="667.2" width="22.5" height="1.6" fill="#222"/><rect x="870.8" y="667.2" width="22.5" height="1.6" fill="#222"/><rect x="904.6" y="667.2" width="26.7" height="1.6" fill="#222"/><rect x="904.6" y="669.1" width="26.7" height="1.6" fill="#f0f0f0"/><rect x="791" y="671.1" width="27.5" height="1.6" fill="#222"/><rect x="828.6" y="671.1" width="27.5" height="1.6" fill="#222"/><rect x="865.8" y="671.1" width="27.5" height="1.6" fill="#222"/><rect x="904.6" y="671.1" width="26.7" height="1.6" fill="#222"/><rect x="904.6" y="673" width="26.7" height="1.6" fill="#f0f0f0"/><rect x="791" y="675" width="22.5" height="1.6" fill="#222"/><rect x="831.1" y="675" width="22.5" height="1.6" fill="#222"/><rect x="870.8" y="675" width="22.5" height="1.6" fill="#222"/><rect x="904.6" y="675" width="26.7" height="1.6" fill="#222"/><rect x="904.6" y="676.9" width="26.7" height="1.6" fill="#f0f0f0"/><rect x="791" y="678.8" width="27.5" height="1.6" fill="#222"/><rect x="828.6" y="678.8" width="27.5" height="1.6" fill="#222"/><rect x="865.8" y="678.8" width="27.5" height="1.6" fill="#222"/><rect x="904.6" y="678.8" width="26.7" height="1.6" fill="#222"/><rect x="904.6" y="680.7" width="26.7" height="1.6" fill="#f0f0f0"/><rect x="791" y="682.7" width="22.5" height="1.6" fill="#222"/><rect x="831.1" y="682.7" width="22.5" height="1.6" fill="#222"/><rect x="870.8" y="682.7" width="22.5" height="1.6" fill="#222"/><rect x="904.6" y="682.7" width="26.7" height="1.6" fill="#222"/><rect x="904.6" y="684.6" width="26.7" height="1.6" fill="#f0f0f0"/><path d="M953 662 V687" stroke="#222" stroke-width="1" stroke-dasharray="2 1.5"/><rect x="943.5" y="664" width="7" height="1.4" fill="#222"/><rect x="955.5" y="664" width="13.5" height="1.4" fill="#222"/><rect x="954" y="668.5" width="15" height="3.2" fill="#111"/><rect x="954" y="673" width="10" height="3.2" fill="#111"/><rect x="943.5" y="679.5" width="7" height="1.4" fill="#222"/><rect x="955.5" y="679.5" width="13.5" height="1.4" fill="#222"/><rect x="943.5" y="683" width="7" height="1.4" fill="#222"/><rect x="955.5" y="683" width="13.5" height="1.4" fill="#222"/><path d="M942.5 669.5 L950.5 672.5 L942.5 675.5 L944.5 672.5 Z" fill="#3a6ae0"/><path d="M995.5 662 V687" stroke="#222" stroke-width="1" stroke-dasharray="2 1.5"/><rect x="980.5" y="664" width="13.5" height="1.4" fill="#222"/><rect x="998" y="664" width="7" height="1.4" fill="#222"/><rect x="981" y="668.5" width="14" height="3.2" fill="#111"/><rect x="985" y="673" width="10" height="3.2" fill="#111"/><rect x="980.5" y="679.5" width="13.5" height="1.4" fill="#222"/><rect x="998" y="679.5" width="7" height="1.4" fill="#222"/><rect x="980.5" y="683" width="13.5" height="1.4" fill="#222"/><rect x="998" y="683" width="7" height="1.4" fill="#222"/><path d="M1006.5 669.5 L998.5 672.5 L1006.5 675.5 L1004.5 672.5 Z" fill="#3a6ae0"/></svg><span class="t" style="left:267.70px;top:666.90px;font-size:15px;line-height:15px;color:#1c1c1c;letter-spacing:0.088px;">Vložit text</span><span class="t" style="left:537.53px;top:663.71px;font-size:18.5px;line-height:18.5px;font-weight:700;color:#111;font-family:'Liberation Serif',serif;">B</span><span class="t" style="left:577.80px;top:663.29px;font-size:19px;line-height:19px;font-weight:700;color:#111;font-family:'Liberation Serif',serif;font-style:italic;">I</span><span class="t" style="left:612.50px;top:664.12px;font-size:18px;line-height:18px;font-weight:700;color:#111;font-family:'Liberation Serif',serif;text-decoration:underline;text-underline-offset:1.5px;text-decoration-thickness:1.3px;">U</span><span class="t" style="left:643.41px;top:663.83px;font-size:26px;line-height:26px;color:#484848;font-family:'Liberation Serif',serif;text-shadow:1px 1px 1px rgba(0,0,0,.3);">A</span><span class="t" style="left:680.88px;top:670.94px;font-size:17.5px;line-height:17.5px;color:#484848;font-family:'Liberation Serif',serif;text-shadow:1px 1px 1px rgba(0,0,0,.3);">A</span><span class="t" style="left:754.65px;top:657.96px;font-size:9.5px;line-height:9.5px;font-weight:700;color:#3a6ae0;">1</span><span class="t" style="left:754.65px;top:667.96px;font-size:9.5px;line-height:9.5px;font-weight:700;color:#3a6ae0;">2</span><span class="t" style="left:754.65px;top:678.16px;font-size:9.5px;line-height:9.5px;font-weight:700;color:#3a6ae0;">3</span>
<div style="left:214px;top:715px;width:1391px;height:300.5px;background:#fff;border:1px solid #c4c4c4;border-right:0;border-bottom:0;box-shadow:0 0 12px 4px rgba(0,0,0,.65)"></div><span class="t" style="left:327.60px;top:727.71px;font-size:25.5px;line-height:25.5px;font-weight:700;color:#000;letter-spacing:-0.154px;text-decoration:underline;text-underline-offset:2.2px;text-decoration-thickness:2px;white-space:pre;-webkit-text-stroke:.45px #000;">S M L O U V A  O  U B Y T O V Á N Í  2024/2025</span><span class="t" style="left:228.00px;top:793.19px;font-size:13.6px;line-height:13.6px;font-weight:700;color:#000;letter-spacing:-0.191px;white-space:pre;">Student:</span><span class="t" style="left:285.90px;top:793.19px;font-size:13.6px;line-height:13.6px;color:#000;letter-spacing:-0.039px;white-space:pre;">«clsUbytovani/Klient/CeleJmeno»</span><span class="t" style="left:668.30px;top:793.19px;font-size:13.6px;line-height:13.6px;font-weight:700;color:#000;letter-spacing:-0.382px;white-space:pre;">Rodné číslo:</span><span class="t" style="left:750.00px;top:793.19px;font-size:13.6px;line-height:13.6px;color:#000;letter-spacing:0.003px;white-space:pre;">«clsUbytovani/Klient/RCneboDatumNarozeni»</span><span class="t" style="left:228.00px;top:828.59px;font-size:13.6px;line-height:13.6px;font-weight:700;color:#000;letter-spacing:-0.223px;white-space:pre;">Státní příslušnost:</span><span class="t" style="left:347.30px;top:828.59px;font-size:13.6px;line-height:13.6px;color:#000;letter-spacing:-0.041px;white-space:pre;">«clsUbytovani/Klient/StatniPrislusnostNazev»</span><span class="t" style="left:723.20px;top:828.59px;font-size:13.6px;line-height:13.6px;font-weight:700;color:#000;letter-spacing:0.035px;white-space:pre;">Doklad totožnosti :</span><span class="t" style="left:850.40px;top:828.59px;font-size:13.6px;line-height:13.6px;color:#000;letter-spacing:-0.016px;white-space:pre;">«clsUbytovani/Klient/OP»</span><span class="t" style="left:228.00px;top:866.09px;font-size:13.6px;line-height:13.6px;font-weight:700;color:#000;letter-spacing:-0.137px;white-space:pre;">Trvalé bydliště:</span><span class="t" style="left:329.00px;top:866.09px;font-size:13.6px;line-height:13.6px;color:#000;letter-spacing:-0.006px;white-space:pre;">«clsUbytovani/Klient/ObecNazev», «clsUbytovani/Klient/UliceNazev»</span><span class="t" style="left:832.60px;top:866.09px;font-size:13.6px;line-height:13.6px;font-weight:700;color:#000;letter-spacing:-1.096px;white-space:pre;">PSČ:</span><span class="t" style="left:865.40px;top:866.09px;font-size:13.6px;line-height:13.6px;color:#000;letter-spacing:-0.150px;white-space:pre;">«clsUbytovani/Klient/PSCSFormatem»</span><span class="t" style="left:228.00px;top:903.19px;font-size:13.6px;line-height:13.6px;font-weight:700;color:#000;letter-spacing:-0.173px;white-space:pre;">Typ studia:</span><span class="t" style="left:301.80px;top:903.19px;font-size:13.6px;line-height:13.6px;color:#000;letter-spacing:-0.030px;white-space:pre;">«clsUbytovani/Klient/StupneStudiaPopis»</span><span class="t" style="left:723.20px;top:903.19px;font-size:13.6px;line-height:13.6px;font-weight:700;color:#000;letter-spacing:-0.374px;white-space:pre;">IDIS:</span><span class="t" style="left:760.80px;top:903.19px;font-size:13.6px;line-height:13.6px;color:#000;letter-spacing:-0.026px;white-space:pre;">«clsUbytovani/Klient/IDIS»</span><span class="t" style="left:228.00px;top:939.19px;font-size:13.6px;line-height:13.6px;font-weight:700;color:#000;letter-spacing:-0.516px;white-space:pre;">Škola:</span><span class="t" style="left:270.40px;top:939.19px;font-size:13.6px;line-height:13.6px;color:#000;letter-spacing:0.024px;white-space:pre;">«clsUbytovani/Klient/Firma/Nazev»</span><span class="t" style="left:613.00px;top:939.19px;font-size:13.6px;line-height:13.6px;font-weight:700;color:#000;letter-spacing:-0.303px;white-space:pre;">Fakulta:</span><span class="t" style="left:667.90px;top:939.19px;font-size:13.6px;line-height:13.6px;color:#000;letter-spacing:0.010px;white-space:pre;">«clsUbytovani/Klient/Firma/ZkratkaFakulty»</span><span class="t" style="left:1108.00px;top:939.19px;font-size:13.6px;line-height:13.6px;font-weight:700;color:#000;letter-spacing:-0.408px;white-space:pre;">Ročník:</span><span class="t" style="left:1159.50px;top:939.19px;font-size:13.6px;line-height:13.6px;color:#000;letter-spacing:0.007px;white-space:pre;">«clsUbytovani/Klient/Rocnik»</span><span class="t" style="left:228.00px;top:976.49px;font-size:13.6px;line-height:13.6px;font-weight:700;color:#000;letter-spacing:-0.067px;">Číslo účtu, ze kterého bude formou inkasa hrazeno kolejné a další služby spojené s ubytováním*):</span><span class="t" style="left:891.00px;top:976.49px;font-size:13.6px;line-height:13.6px;color:#000;letter-spacing:-0.014px;white-space:pre;">«clsUbytovani/Klient/Ucet/CisloUctuSPredcislimAKodem»</span><span class="t" style="left:228.00px;top:994.19px;font-size:13.6px;line-height:13.6px;color:#000;letter-spacing:0.029px;">*) u nově ubytovaných nutno před podpisem smlouvy a při nástupu na kolej doložit souhlas příslušného finančního ústavu s provedením inkasa, pro stávající ubytované může být tento souhlas nahrazen čestným prohlášením</span>
<div style="left:1614.3px;top:653.6px;width:1.1px;height:362px;background:#2b2b2b"></div><div style="left:1615.4px;top:653.6px;width:1.6px;height:362px;background:#5a5a5a"></div><div style="left:1624.3px;top:655px;width:255.7px;height:24.5px;background:#272727;border:1.4px solid #4b4b4b;border-radius:4px"></div><div style="left:1858px;top:656.4px;width:20.6px;height:21.7px;background:#2d2d2d;border-radius:0 3px 3px 0"></div><span class="t" style="left:1628.30px;top:659.90px;font-size:15px;line-height:15px;color:#848484;letter-spacing:0.033px;">Ubytovani</span><svg width="10.5" height="5.2" viewBox="0 0 10.5 5.2" style="left:1862.25px;top:664.95px"><path d="M0 0 H10.5 L5.25 5.2 Z" fill="#5a5a5a"/></svg><div style="left:1624px;top:682px;width:256.2px;height:305px;background:#212121;border:1.6px solid #f0f0f0;border-radius:1px"></div><span class="t" style="left:1652.50px;top:696.90px;font-size:15px;line-height:15px;letter-spacing:-0.219px;">AkademickyRok</span><span class="t" style="left:1652.50px;top:716.90px;font-size:15px;line-height:15px;letter-spacing:0.070px;">AlokovanoDo</span><svg width="8" height="12" viewBox="0 0 8 12" style="left:1635px;top:717.2px"><path d="M1 1 L6.5 6 L1 11 Z" fill="#9a9a9a" stroke="#bbb" stroke-width=".8"/></svg><span class="t" style="left:1652.50px;top:736.90px;font-size:15px;line-height:15px;letter-spacing:-0.350px;">BarvaZvyrazneni</span><span class="t" style="left:1652.50px;top:756.90px;font-size:15px;line-height:15px;letter-spacing:-0.460px;">CelkovaCena</span><span class="t" style="left:1652.50px;top:776.90px;font-size:15px;line-height:15px;letter-spacing:-0.715px;">Cena</span><span class="t" style="left:1652.50px;top:796.90px;font-size:15px;line-height:15px;letter-spacing:-0.477px;">CenaZaMesic</span><span class="t" style="left:1652.50px;top:816.90px;font-size:15px;line-height:15px;letter-spacing:-0.610px;">CenaZaMesicBezDPH</span><span class="t" style="left:1652.50px;top:836.90px;font-size:15px;line-height:15px;letter-spacing:-0.523px;">CenaZaMesicDPH</span><span class="t" style="left:1652.50px;top:856.90px;font-size:15px;line-height:15px;letter-spacing:-0.435px;">CenaZaMesicPlatnaKeKonciUl</span><svg width="8" height="12" viewBox="0 0 8 12" style="left:1635px;top:857.2px"><path d="M1 1 L6.5 6 L1 11 Z" fill="#9a9a9a" stroke="#bbb" stroke-width=".8"/></svg><span class="t" style="left:1652.50px;top:876.90px;font-size:15px;line-height:15px;letter-spacing:-0.475px;">CenaZaMesicRucne</span><span class="t" style="left:1652.50px;top:896.90px;font-size:15px;line-height:15px;letter-spacing:-0.501px;">CenaZaMesicSlovyCZ</span><span class="t" style="left:1652.50px;top:916.90px;font-size:15px;line-height:15px;letter-spacing:-0.503px;">CenaZaMesicSlovyEN</span><span class="t" style="left:1652.50px;top:936.90px;font-size:15px;line-height:15px;letter-spacing:-0.427px;">CenaZaNoc</span><div style="left:1857.7px;top:685px;width:20.3px;height:19.7px;background:#5c5c5c;border-radius:3px"></div><svg width="9" height="4.6" viewBox="0 0 9 4.6" style="left:1863.30px;top:692.70px"><path d="M0 4.6 H9 L4.5 0 Z" fill="#8a8a8a"/></svg><div style="left:1857.7px;top:707px;width:20.3px;height:20.3px;background:#5c5c5c;border-radius:3px"></div><div style="left:1857.7px;top:942px;width:20.3px;height:19.5px;background:#5c5c5c;border-radius:3px"></div><svg width="9" height="4.6" viewBox="0 0 9 4.6" style="left:1863.30px;top:949.70px"><path d="M0 0 H9 L4.5 4.6 Z" fill="#8a8a8a"/></svg><div style="left:1626px;top:965px;width:19.6px;height:19.8px;background:#5c5c5c;border-radius:3px"></div><svg width="6" height="10" viewBox="0 0 6 10" style="left:1632.7px;top:970px"><path d="M5.5 0 V10 L0 5 Z" fill="#8a8a8a"/></svg><div style="left:1648.7px;top:965px;width:99px;height:19.8px;background:#5c5c5c;border-radius:3px"></div><div style="left:1835px;top:965px;width:19.5px;height:19.8px;background:#5c5c5c;border-radius:3px"></div><svg width="6" height="10" viewBox="0 0 6 10" style="left:1842.5px;top:970px"><path d="M.5 0 V10 L6 5 Z" fill="#8a8a8a"/></svg><div style="left:1624px;top:990.3px;width:256.2px;height:24.5px;background:#212121;border:1.6px solid #f0f0f0;border-radius:4px"></div><span class="t" style="left:1628.00px;top:995.80px;font-size:13px;line-height:13px;letter-spacing:-0.234px;">«»</span></div>

<!-- ANNOTATIONS -->
<div id="annot" style="left:0;top:0;width:1918px;height:1050px"><svg width="1918" height="1050" viewBox="0 0 1918 1050" style="left:0;top:0"><ellipse cx="1750.5" cy="213.5" rx="140" ry="40" fill="none" stroke="#f8020c" stroke-width="2.7"/><ellipse cx="378.9" cy="567.2" rx="204.5" ry="117" fill="none" stroke="#f8020c" stroke-width="2.8"/></svg></div>
</div>
</body>
</html>
